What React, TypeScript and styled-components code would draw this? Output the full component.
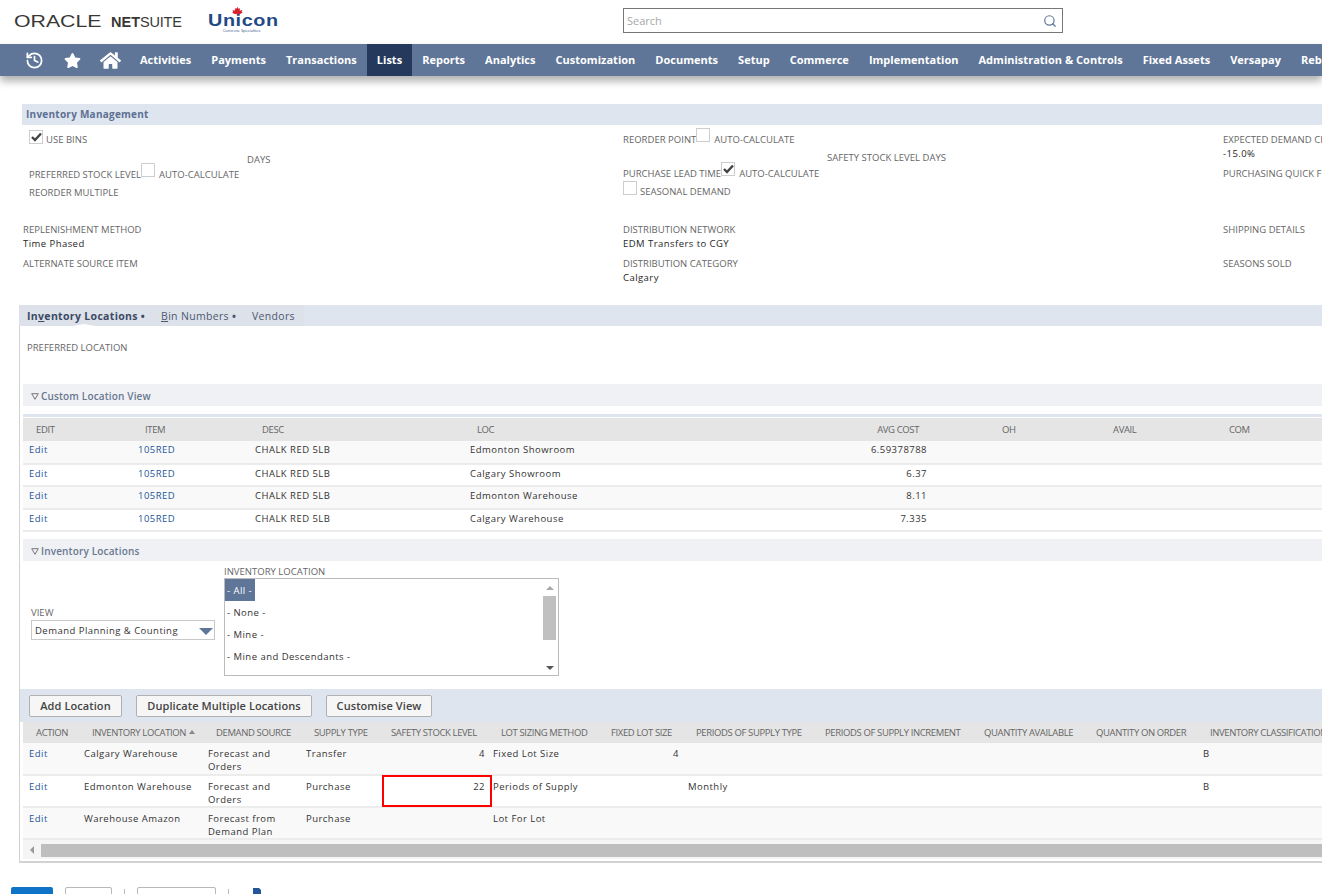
import React from 'react';
import styled, { createGlobalStyle } from 'styled-components';
import { History, Search } from 'lucide-react';
import { FaStar, FaHome } from 'react-icons/fa';

const GlobalStyle = createGlobalStyle`
    html, body {
        margin: 0;
        padding: 0;
        background: #fff;
        overflow: hidden;
        height: 894px;
    }
    body {
        font-family: "Open Sans", "Liberation Sans", sans-serif;
        font-size: 10px;
        color: #262626;
    }
`

const Page = styled.div`
    width: 1322px;
    height: 894px;
    overflow: hidden;
`
const Header = styled.div`
    height: 44px;
    display: flex;
    align-items: flex-start;
`
const LogoOracle = styled.div`
    width: 194px;
    padding: 12px 0 0 14px;
    height: 20px;
    line-height: 20px;
    font-family: "Liberation Sans", sans-serif;
    color: #3a3835;
    white-space: nowrap;
`
const OracleWord = styled.span`
    font-size: 16px;
    display: inline-block;
    transform: scaleX(1.33);
    transform-origin: left center;
    width: 97px;
`
const NetWord = styled.b`
    font-size: 14.5px;
`
const SuiteWord = styled.span`
    font-size: 14.5px;
    letter-spacing: -0.2px;
`
const LogoUnicon = styled.div`
    width: 415px;
    display: flex;
    flex-direction: column;
    align-items: flex-start;
    padding-top: 9px;
    line-height: 1;
`
const UniconWord = styled.div`
    font-family: "Liberation Sans", sans-serif;
    font-weight: 700;
    font-size: 16.5px;
    letter-spacing: 0.5px;
    color: #1f4a86;
    height: 16px;
    line-height: 16px;
    margin-top: 3px;
    display: flex;
    transform: scaleX(1.2);
    transform-origin: left center;
`
const UniconI = styled.span`
    position: relative;
`
const Leaf = styled.svg`
    position: absolute;
    left: -3px;
    top: -5px;
    width: 9px;
    height: 9px;
`
const UniconSub = styled.div`
    font-size: 4px;
    color: #1f4a86;
    margin: 1px 0 0 15px;
`
const SearchBox = styled.div`
    margin-top: 8px;
    width: 440px;
    height: 25px;
    box-sizing: border-box;
    border: 1px solid #777;
    display: flex;
    align-items: center;
    justify-content: space-between;
    padding: 0 5px 0 3px;
    color: #a8a8a8;
    font-size: 11px;
`
const NavBar = styled.div`
    height: 32px;
    background: #5f7698;
    display: flex;
    box-shadow: 0 5px 8px rgba(0, 0, 0, 0.32);
    position: relative;
    white-space: nowrap;
`
const NavIcon = styled.div<{ $w: number }>`
    flex: none;
    width: ${props => props.$w}px;
    display: flex;
    align-items: center;
    justify-content: center;
    color: #fff;
`
const NavSpacer = styled.div`
    flex: none;
    width: 15px;
`
const NavItem = styled.div<{ $active?: boolean }>`
    flex: none;
    padding: 0 10px;
    line-height: 32px;
    font-weight: 700;
    font-size: 11px;
    letter-spacing: 0.015px;
    color: #fff;
    background: ${props => props.$active ? '#25395c' : 'transparent'};
`
const Content = styled.div`
    padding-top: 28px;
    white-space: nowrap;
`
const MainBar = styled.div`
    margin-left: 22px;
    height: 21px;
    line-height: 21px;
    background: #dfe5ef;
    padding-left: 4px;
    font-weight: 700;
    font-size: 10px;
    letter-spacing: 0.25px;
    color: #5c7092;
`
const FieldGrid = styled.div`
    display: grid;
    grid-template-columns: 600px 600px 99px;
    margin-left: 23px;
    height: 179px;
    padding-top: 1px;
`
const FieldColumn = styled.div`
    min-width: 0;
`
const Line = styled.div<{ $mt?: number; $left?: number }>`
    display: flex;
    height: 14px;
    line-height: 14px;
    margin-top: ${props => props.$mt ?? 0}px;
    padding-left: ${props => props.$left ?? 0}px;
`
const Label = styled.span`
    font-size: 9.5px;
    letter-spacing: 0.02px;
    color: #666;
`
const Value = styled.span`
    font-size: 9.5px;
    letter-spacing: 0.45px;
    color: #262626;
`
const Box = styled.span<{ $lift: number; $after: number }>`
    flex: none;
    width: 14px;
    height: 14px;
    box-sizing: border-box;
    border: 1px solid #cdcdcd;
    margin: ${props => props.$lift}px ${props => props.$after}px 0 0;
    display: flex;
    align-items: center;
    justify-content: center;
`
const Tabs = styled.div`
    margin-left: 19px;
    height: 21px;
    background: #dfe5ef;
`
const TabGroup = styled.div`
    width: 285px;
    height: 21px;
    background: #dde1ea;
    display: flex;
    position: relative;
    &::after {
        content: '';
        position: absolute;
        left: 54px;
        bottom: 0;
        border-left: 11px solid transparent;
        border-right: 11px solid transparent;
        border-bottom: 2px solid #fff;
    }
`
const Tab = styled.div<{ $w: number; $active?: boolean }>`
    flex: none;
    box-sizing: border-box;
    width: ${props => props.$w}px;
    padding-left: ${props => props.$active ? 8 : 0}px;
    line-height: 22px;
    font-size: 10.5px;
    letter-spacing: 0.33px;
    font-weight: ${props => props.$active ? 700 : 400};
    color: ${props => props.$active ? '#3a4a64' : '#4b5a70'};
`
const Frame = styled.div`
    margin-left: 19px;
    height: 537px;
    box-sizing: border-box;
    border-left: 1px solid #d2d2d2;
    border-bottom: 2px solid #d2d2d2;
    padding-left: 3px;
`
const PrefLine = styled.div`
    height: 58px;
    padding: 14px 0 0 4px;
    box-sizing: border-box;
    line-height: 14px;
`
const SubBar = styled.div<{ $mt?: number }>`
    height: 22px;
    box-sizing: border-box;
    padding: 2px 0 0 8px;
    margin-top: ${props => props.$mt ?? 0}px;
    background: #f0f1f5;
    font-weight: 600;
    font-size: 10px;
    letter-spacing: 0.15px;
    color: #687890;
    display: flex;
    align-items: center;
    gap: 2px;
`
const Collapse = styled.svg`
    width: 8px;
    height: 7px;
    margin-top: 1px;
`
const Strip = styled.div`
    margin-top: 8px;
    height: 3px;
    background: #dfe5ef;
    border-bottom: 1px solid #fff;
`
const DataTable = styled.table<{ $w: number }>`
    table-layout: fixed;
    border-collapse: collapse;
    width: ${props => props.$w}px;
`
const Head = styled.th<{ $pl?: number; $pr?: number; $right?: boolean; $h: number }>`
    height: ${props => props.$h}px;
    padding: 0 ${props => props.$pr ?? 0}px 0 ${props => props.$pl ?? 13}px;
    background: #e5e5e5;
    font-weight: 400;
    font-size: 9.5px;
    letter-spacing: -0.38px;
    color: #666;
    text-align: ${props => props.$right ? 'right' : 'left'};
`
const Row = styled.tr<{ $alt?: boolean }>`
    background: ${props => props.$alt ? '#f9f9f9' : '#fff'};
`
const Cell = styled.td<{ $pl?: number; $pr?: number; $pt: number; $right?: boolean; $h: number }>`
    position: relative;
    height: ${props => props.$h}px;
    box-sizing: border-box;
    vertical-align: top;
    padding: ${props => props.$pt}px ${props => props.$pr ?? 0}px 0 ${props => props.$pl ?? 6}px;
    border-bottom: 2px solid #ececec;
    font-size: 9.5px;
    letter-spacing: 0.47px;
    line-height: 13px;
    color: #333;
    white-space: normal;
    text-align: ${props => props.$right ? 'right' : 'left'};
`
const RecordLink = styled.a`
    color: #255599;
`
const Highlight = styled.div`
    position: absolute;
    left: -1px;
    top: -1px;
    right: -1px;
    bottom: -1px;
    border: 2px solid #f00;
`
const FilterRow = styled.div`
    height: 128px;
    display: flex;
    padding-left: 8px;
`
const ViewColumn = styled.div`
    width: 193px;
    padding-top: 45px;
`
const FilterLabel = styled.div`
    height: 13px;
    line-height: 13px;
    font-size: 9.5px;
    letter-spacing: 0.02px;
    color: #666;
`
const SelectBox = styled.div`
    width: 184px;
    height: 20px;
    margin-top: 1px;
    box-sizing: border-box;
    border: 1px solid #c9c9c9;
    display: flex;
    align-items: center;
    justify-content: space-between;
    padding: 0 1px 0 3px;
    font-size: 9.5px;
    letter-spacing: 0.47px;
    color: #333;
`
const ListColumn = styled.div`
    padding-top: 4px;
`
const ListBox = styled.div`
    width: 335px;
    height: 98px;
    box-sizing: border-box;
    border: 1px solid #bbb;
    display: flex;
    justify-content: space-between;
`
const Options = styled.div`
    display: flex;
    flex-direction: column;
    align-items: flex-start;
`
const Option = styled.div<{ $selected?: boolean }>`
    height: 22px;
    line-height: 24px;
    padding: 0 3px 0 2px;
    font-size: 9.5px;
    letter-spacing: 0.47px;
    background: ${props => props.$selected ? '#5f7698' : 'transparent'};
    color: ${props => props.$selected ? '#fff' : '#333'};
`
const ListScroll = styled.div`
    width: 13px;
    margin-right: 2px;
    display: flex;
    flex-direction: column;
    align-items: center;
    justify-content: space-between;
    padding: 7px 0 5px;
    position: relative;
`
const ListThumb = styled.div`
    position: absolute;
    left: 0;
    top: 17px;
    width: 13px;
    height: 44px;
    background: #c0c0c0;
`
const Arrow = styled.span<{ $dir: 'up' | 'down' | 'left'; $color: string }>`
    width: 0;
    height: 0;
    ${({ $dir, $color }) => $dir === 'up' && `
        border-left: 4px solid transparent;
        border-right: 4px solid transparent;
        border-bottom: 4px solid ${$color};
    `}
    ${({ $dir, $color }) => $dir === 'down' && `
        border-left: 4px solid transparent;
        border-right: 4px solid transparent;
        border-top: 4px solid ${$color};
    `}
    ${({ $dir, $color }) => $dir === 'left' && `
        border-top: 4px solid transparent;
        border-bottom: 4px solid transparent;
        border-right: 4px solid ${$color};
    `}
`
const SortArrow = styled.span`
    display: inline-block;
    width: 0;
    height: 0;
    margin-left: 3px;
    vertical-align: 2px;
    border-left: 3px solid transparent;
    border-right: 3px solid transparent;
    border-bottom: 4px solid #888;
`
const SelectArrow = styled.span`
    width: 0;
    height: 0;
    margin-top: 2px;
    border-left: 7px solid transparent;
    border-right: 7px solid transparent;
    border-top: 7px solid #5f7698;
`
const ButtonBar = styled.div`
    height: 33px;
    margin-left: -3px;
    padding-left: 9px;
    box-sizing: border-box;
    background: #dfe5ef;
    display: flex;
    align-items: center;
    gap: 14px;
`
const ActionButton = styled.div<{ $w: number }>`
    width: ${props => props.$w}px;
    height: 22px;
    box-sizing: border-box;
    border: 1px solid #b0b0b0;
    border-radius: 2px;
    background: #f6f6f6;
    text-align: center;
    line-height: 20px;
    font-size: 11px;
    font-weight: 600;
    letter-spacing: 0.08px;
    color: #444;
`
const LineTable = styled.div`
    height: 137px;
    background: #f5f5f5;
`
const HScroll = styled.div`
    height: 13px;
    margin-top: 4px;
    display: flex;
    align-items: center;
`
const HScrollLeft = styled.div`
    width: 18px;
    display: flex;
    justify-content: center;
`
const HScrollThumb = styled.div`
    flex: 1;
    height: 13px;
    background: #bebebe;
`
const Footer = styled.div`
    margin-top: 24px;
    height: 30px;
    display: flex;
    align-items: flex-start;
    padding-left: 11px;
`
const SaveButton = styled.div`
    width: 42px;
    height: 24px;
    background: #0f74c7;
    border-radius: 2px;
    margin-right: 12px;
`
const FooterButton = styled.div<{ $w: number }>`
    width: ${props => props.$w}px;
    height: 24px;
    box-sizing: border-box;
    border: 1px solid #b8b8b8;
    border-radius: 2px;
`
const FooterDivider = styled.div`
    width: 1px;
    height: 24px;
    margin: 2px 12px 0;
    background: #bbb;
`
const FooterIcon = styled.svg`
    margin-left: 11px;
    width: 10px;
    height: 12px;
`
const Dot = styled.span`
    font-weight: 700;
    margin-left: 3px;
`

const navItems = ['Activities', 'Payments', 'Transactions', 'Lists', 'Reports', 'Analytics', 'Customization', 'Documents', 'Setup', 'Commerce', 'Implementation', 'Administration & Controls', 'Fixed Assets', 'Versapay', 'Rebates'];

const tick = (
    <svg width="11" height="10" viewBox="0 0 11 10">
        <path d="M1 5 L4 8 L10 1.5" fill="none" stroke="#444" strokeWidth="2.4" />
    </svg>
);

const collapse = (
    <Collapse viewBox="0 0 8 7">
        <path d="M.7 .7 H7.3 L4 6.3 Z" fill="none" stroke="#777" strokeWidth="1" />
    </Collapse>
);

const customRows = [
    ['Edmonton Showroom', '6.59378788'],
    ['Calgary Showroom', '6.37'],
    ['Edmonton Warehouse', '8.11'],
    ['Calgary Warehouse', '7.335'],
];

const customCols = [109, 117, 215, 236, 289, 111, 116, 106];

const lineCols = [55, 124, 98, 83, 108, 112, 82, 130, 160, 112, 113, 126];
const lineHeads = ['ACTION', 'INVENTORY LOCATION', 'DEMAND SOURCE', 'SUPPLY TYPE', 'SAFETY STOCK LEVEL', 'LOT SIZING METHOD', 'FIXED LOT SIZE', 'PERIODS OF SUPPLY TYPE', 'PERIODS OF SUPPLY INCREMENT', 'QUANTITY AVAILABLE', 'QUANTITY ON ORDER', 'INVENTORY CLASSIFICATION'];
const linePad = [13, 14, 14, 14, 8, 10, 8, 11, 10, 9, 9, 10];

const lineRows = [
    { loc: 'Calgary Warehouse', source: 'Forecast and Orders', supply: 'Transfer', safety: '4', lot: 'Fixed Lot Size', fixed: '4', period: '', cls: 'B', alt: true },
    { loc: 'Edmonton Warehouse', source: 'Forecast and Orders', supply: 'Purchase', safety: '22', lot: 'Periods of Supply', fixed: '', period: 'Monthly', cls: 'B', alt: false, marked: true },
    { loc: 'Warehouse Amazon', source: 'Forecast from Demand Plan', supply: 'Purchase', safety: '', lot: 'Lot For Lot', fixed: '', period: '', cls: '', alt: true },
];

const App: React.FC = () => {
    return (
        <Page>
            <GlobalStyle />
            <Header>
                <LogoOracle>
                    <OracleWord>ORACLE</OracleWord><NetWord>NET</NetWord><SuiteWord>SUITE</SuiteWord>
                </LogoOracle>
                <LogoUnicon>
                    <UniconWord>
                        Un
                        <UniconI>
                            <Leaf viewBox="0 0 10 10">
                                <path d="M5 0 L6 2 L7.5 1.5 L7 4 L9.5 3.5 L9 5.5 L10 6 L7 8 L5.3 7.6 L5.3 10 L4.7 10 L4.7 7.6 L3 8 L0 6 L1 5.5 L.5 3.5 L3 4 L2.5 1.5 L4 2 Z" fill="#d6202a" />
                            </Leaf>
                            i
                        </UniconI>
                        con
                    </UniconWord>
                    <UniconSub>Concrete Specialties</UniconSub>
                </LogoUnicon>
                <SearchBox>
                    Search
                    <Search size={14} color="#5f7698" strokeWidth={2} />
                </SearchBox>
            </Header>
            <NavBar>
                <NavSpacer />
                <NavIcon $w={38}><History size={19} strokeWidth={2.2} /></NavIcon>
                <NavIcon $w={38}><FaStar size={17} /></NavIcon>
                <NavIcon $w={39}><FaHome size={21} /></NavIcon>
                {navItems.map(item => (
                    <NavItem key={item} $active={item === 'Lists'}>{item}</NavItem>
                ))}
            </NavBar>
            <Content>
                <MainBar>Inventory Management</MainBar>
                <FieldGrid>
                    <FieldColumn>
                        <Line $mt={7} $left={6}>
                            <Box $lift={-3} $after={3}>{tick}</Box>
                            <Label>USE BINS</Label>
                        </Line>
                        <Line $mt={6} $left={224}><Label>DAYS</Label></Line>
                        <Line $mt={1} $left={6}>
                            <Label>PREFERRED STOCK LEVEL</Label>
                            <Box $lift={-5} $after={4}></Box>
                            <Label>AUTO-CALCULATE</Label>
                        </Line>
                        <Line $mt={4} $left={6}><Label>REORDER MULTIPLE</Label></Line>
                        <Line $mt={23}><Label>REPLENISHMENT METHOD</Label></Line>
                        <Line><Value>Time Phased</Value></Line>
                        <Line $mt={6}><Label>ALTERNATE SOURCE ITEM</Label></Line>
                    </FieldColumn>
                    <FieldColumn>
                        <Line $mt={7}>
                            <Label>REORDER POINT</Label>
                            <Box $lift={-5} $after={4}></Box>
                            <Label>AUTO-CALCULATE</Label>
                        </Line>
                        <Line $mt={4} $left={204}><Label>SAFETY STOCK LEVEL DAYS</Label></Line>
                        <Line $mt={2}>
                            <Label>PURCHASE LEAD TIME</Label>
                            <Box $lift={-5} $after={4}>{tick}</Box>
                            <Label>AUTO-CALCULATE</Label>
                        </Line>
                        <Line $mt={4}>
                            <Box $lift={-4} $after={3}></Box>
                            <Label>SEASONAL DEMAND</Label>
                        </Line>
                        <Line $mt={24}><Label>DISTRIBUTION NETWORK</Label></Line>
                        <Line><Value>EDM Transfers to CGY</Value></Line>
                        <Line $mt={6}><Label>DISTRIBUTION CATEGORY</Label></Line>
                        <Line><Value>Calgary</Value></Line>
                    </FieldColumn>
                    <FieldColumn>
                        <Line $mt={7}><Label>EXPECTED DEMAND CHANGE</Label></Line>
                        <Line><Value>-15.0%</Value></Line>
                        <Line $mt={6}><Label>PURCHASING QUICK FILTER</Label></Line>
                        <Line $mt={42}><Label>SHIPPING DETAILS</Label></Line>
                        <Line $mt={20}><Label>SEASONS SOLD</Label></Line>
                    </FieldColumn>
                </FieldGrid>
                <Tabs>
                    <TabGroup>
                        <Tab $w={142} $active>In<u>v</u>entory Locations<Dot>•</Dot></Tab>
                        <Tab $w={91}><u>B</u>in Numbers<Dot>•</Dot></Tab>
                        <Tab $w={46}>Vendors</Tab>
                    </TabGroup>
                </Tabs>
                <Frame>
                    <PrefLine><Label>PREFERRED LOCATION</Label></PrefLine>
                    <SubBar>{collapse}Custom Location View</SubBar>
                    <Strip />
                    <DataTable $w={1299}>
                        <colgroup>
                            {customCols.map((w, i) => <col key={i} width={w} />)}
                        </colgroup>
                        <thead>
                            <tr>
                                <Head $h={23}>EDIT</Head>
                                <Head $h={23}>ITEM</Head>
                                <Head $h={23}>DESC</Head>
                                <Head $h={23}>LOC</Head>
                                <Head $h={23} $right $pr={70}>AVG COST</Head>
                                <Head $h={23}>OH</Head>
                                <Head $h={23}>AVAIL</Head>
                                <Head $h={23}>COM</Head>
                            </tr>
                        </thead>
                        <tbody>
                            {customRows.map(([loc, cost], i) => (
                                <Row key={loc} $alt={i % 2 === 0}>
                                    <Cell $h={22.5} $pt={2}><RecordLink>Edit</RecordLink></Cell>
                                    <Cell $h={22.5} $pt={2}><RecordLink>105RED</RecordLink></Cell>
                                    <Cell $h={22.5} $pt={2}>CHALK RED 5LB</Cell>
                                    <Cell $h={22.5} $pt={2}>{loc}</Cell>
                                    <Cell $h={22.5} $pt={2} $right $pr={62}>{cost}</Cell>
                                    <Cell $h={22.5} $pt={2} />
                                    <Cell $h={22.5} $pt={2} />
                                    <Cell $h={22.5} $pt={2} />
                                </Row>
                            ))}
                        </tbody>
                    </DataTable>
                    <SubBar $mt={7}>{collapse}Inventory Locations</SubBar>
                    <FilterRow>
                        <ViewColumn>
                            <FilterLabel>VIEW</FilterLabel>
                            <SelectBox>Demand Planning &amp; Counting<SelectArrow /></SelectBox>
                        </ViewColumn>
                        <ListColumn>
                            <FilterLabel>INVENTORY LOCATION</FilterLabel>
                            <ListBox>
                                <Options>
                                    <Option $selected>- All -</Option>
                                    <Option>- None -</Option>
                                    <Option>- Mine -</Option>
                                    <Option>- Mine and Descendants -</Option>
                                </Options>
                                <ListScroll>
                                    <Arrow $dir="up" $color="#aaa" />
                                    <ListThumb />
                                    <Arrow $dir="down" $color="#555" />
                                </ListScroll>
                            </ListBox>
                        </ListColumn>
                    </FilterRow>
                    <ButtonBar>
                        <ActionButton $w={93}>Add Location</ActionButton>
                        <ActionButton $w={176}>Duplicate Multiple Locations</ActionButton>
                        <ActionButton $w={106}>Customise View</ActionButton>
                    </ButtonBar>
                    <LineTable>
                        <DataTable $w={1303}>
                            <colgroup>
                                {lineCols.map((w, i) => <col key={i} width={w} />)}
                            </colgroup>
                            <thead>
                                <tr>
                                    {lineHeads.map((h, i) => (
                                        <Head key={h} $h={21} $pl={linePad[i]}>
                                            {h}{i === 1 && <SortArrow />}
                                        </Head>
                                    ))}
                                </tr>
                            </thead>
                            <tbody>
                                {lineRows.map(row => (
                                    <Row key={row.loc} $alt={row.alt}>
                                        <Cell $h={31.7} $pt={4}><RecordLink>Edit</RecordLink></Cell>
                                        <Cell $h={31.7} $pt={4}>{row.loc}</Cell>
                                        <Cell $h={31.7} $pt={4}>{row.source}</Cell>
                                        <Cell $h={31.7} $pt={4}>{row.supply}</Cell>
                                        <Cell $h={31.7} $pt={4} $right $pr={6}>
                                            {row.safety}
                                            {row.marked && <Highlight />}
                                        </Cell>
                                        <Cell $h={31.7} $pt={4} $pl={2}>{row.lot}</Cell>
                                        <Cell $h={31.7} $pt={4} $right $pr={6}>{row.fixed}</Cell>
                                        <Cell $h={31.7} $pt={4} $pl={3}>{row.period}</Cell>
                                        <Cell $h={31.7} $pt={4} />
                                        <Cell $h={31.7} $pt={4} />
                                        <Cell $h={31.7} $pt={4} />
                                        <Cell $h={31.7} $pt={4} $pl={3}>{row.cls}</Cell>
                                    </Row>
                                ))}
                            </tbody>
                        </DataTable>
                        <HScroll>
                            <HScrollLeft><Arrow $dir="left" $color="#999" /></HScrollLeft>
                            <HScrollThumb />
                        </HScroll>
                    </LineTable>
                </Frame>
                <Footer>
                    <SaveButton />
                    <FooterButton $w={47} />
                    <FooterDivider />
                    <FooterButton $w={79} />
                    <FooterDivider />
                    <FooterIcon viewBox="0 0 10 12">
                        <path d="M1 1 H7 L9 3 V11 H1 Z" fill="#255599" />
                    </FooterIcon>
                </Footer>
            </Content>
        </Page>
    );
}

export default App;
